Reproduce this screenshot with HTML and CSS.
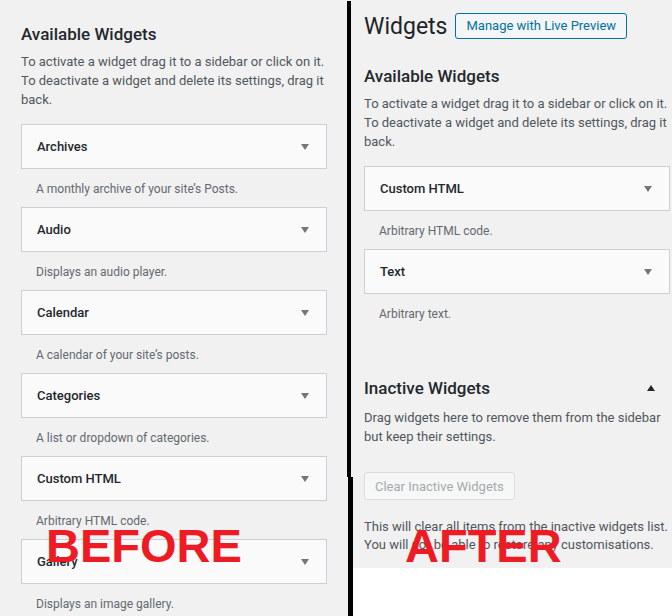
FILE: index.html
```html
<!DOCTYPE html>
<html lang="en">
<head>
    <meta charset="UTF-8">
    <meta name="viewport" content="width=device-width, initial-scale=1.0">
    <title>Widgets - Before and After</title>
    <link rel="stylesheet" href="styles.css">
</head>
<body>
    <div class="panel panel-before">
        <div class="widgets-area">
            <h2 class="section-title">Available Widgets</h2>
            <p class="section-desc">To activate a widget drag it to a sidebar or click on it. To deactivate a widget and delete its settings, drag it back.</p>
            <div class="widget-list">
                <div class="widget">
                    <div class="widget-top"><span class="widget-name">Archives</span><span class="arrow-down"></span></div>
                    <p class="widget-desc">A monthly archive of your site’s Posts.</p>
                </div>
                <div class="widget">
                    <div class="widget-top"><span class="widget-name">Audio</span><span class="arrow-down"></span></div>
                    <p class="widget-desc">Displays an audio player.</p>
                </div>
                <div class="widget">
                    <div class="widget-top"><span class="widget-name">Calendar</span><span class="arrow-down"></span></div>
                    <p class="widget-desc">A calendar of your site’s posts.</p>
                </div>
                <div class="widget">
                    <div class="widget-top"><span class="widget-name">Categories</span><span class="arrow-down"></span></div>
                    <p class="widget-desc">A list or dropdown of categories.</p>
                </div>
                <div class="widget">
                    <div class="widget-top"><span class="widget-name">Custom HTML</span><span class="arrow-down"></span></div>
                    <p class="widget-desc">Arbitrary HTML code.</p>
                </div>
                <div class="widget">
                    <div class="widget-top"><span class="widget-name">Gallery</span><span class="arrow-down"></span></div>
                    <p class="widget-desc">Displays an image gallery.</p>
                </div>
            </div>
        </div>
        <div class="stamp stamp-before">BEFORE</div>
    </div>

    <div class="divider">
        <div class="divider-top"></div>
        <div class="divider-bottom"></div>
    </div>

    <div class="panel panel-after">
        <div class="after-content">
            <div class="page-header">
                <h1 class="page-title">Widgets</h1>
                <a href="#" class="header-button">Manage with Live Preview</a>
            </div>
            <div class="widgets-area">
                <h2 class="section-title">Available Widgets</h2>
                <p class="section-desc">To activate a widget drag it to a sidebar or click on it. To deactivate a widget and delete its settings, drag it back.</p>
                <div class="widget-list">
                    <div class="widget">
                        <div class="widget-top"><span class="widget-name">Custom HTML</span><span class="arrow-down"></span></div>
                        <p class="widget-desc">Arbitrary HTML code.</p>
                    </div>
                    <div class="widget">
                        <div class="widget-top"><span class="widget-name">Text</span><span class="arrow-down"></span></div>
                        <p class="widget-desc">Arbitrary text.</p>
                    </div>
                </div>

                <div class="inactive-head">
                    <h2 class="section-title">Inactive Widgets</h2>
                    <span class="arrow-up"></span>
                </div>
                <p class="section-desc inactive-desc">Drag widgets here to remove them from the sidebar but keep their settings.</p>
                <button class="clear-button" disabled>Clear Inactive Widgets</button>
                <p class="section-desc clear-note">This will clear all items from the inactive widgets list. You will not be able to restore any customisations.</p>
            </div>
        </div>
        <div class="stamp stamp-after">AFTER</div>
    </div>
</body>
</html>
```
FILE: styles.css
```css
body {
    margin: 0;
    width: 672px;
    height: 616px;
    overflow: hidden;
    display: flex;
    background: #fff;
    font-family: Roboto, "Noto Sans", sans-serif;
    color: #23282d;
}
p, h1, h2 {
    margin: 0;
}

.panel {
    position: relative;
}
.panel-before {
    width: 326px;
    padding-left: 21px;
    background: #f1f1f1;
}
.panel-after {
    flex: 1;
    display: flex;
    flex-direction: column;
}
.after-content {
    background: #f1f1f1;
    padding: 13px 0 14px 11px;
}

.divider {
    width: 6px;
    display: flex;
    flex-direction: column;
    background: #f1f1f1;
}
.divider-top {
    margin-top: 1px;
    width: 4px;
    height: 476px;
    background: #000;
}
.divider-bottom {
    flex: 1;
    width: 5px;
    margin-left: 1px;
    background: #000;
}

.widgets-area {
    width: 306px;
}
.panel-before .widgets-area {
    padding-top: 23px;
}

.page-header {
    display: flex;
    align-items: flex-start;
    height: 26px;
    margin-bottom: 26px;
}
.page-title {
    margin-top: 1px;
    font-size: 23px;
    font-weight: 400;
    line-height: 26px;
    color: #1d2327;
}
.header-button {
    margin-left: 8px;
    padding: 0 10px;
    line-height: 24px;
    font-size: 13px;
    color: #0071a1;
    background: #f3f5f6;
    border: 1px solid #0071a1;
    border-radius: 3px;
    text-decoration: none;
}

.section-title {
    font-size: 17px;
    font-weight: 500;
    line-height: 22px;
    color: #23282d;
}
.section-desc {
    margin-top: 7px;
    font-size: 13px;
    line-height: 19px;
    color: #50575e;
}

.widget-list {
    margin-top: 15px;
}
.widget {
    padding-bottom: 9px;
}
.widget-top {
    height: 43px;
    display: flex;
    align-items: center;
    justify-content: space-between;
    padding: 0 17px 0 15px;
    background: #fafafa;
    border: 1px solid #ccd0d4;
}
.widget-name {
    font-size: 13px;
    font-weight: 500;
    color: #23282d;
}
.arrow-down {
    width: 0;
    height: 0;
    border-left: 4px solid transparent;
    border-right: 4px solid transparent;
    border-top: 6px solid #72777c;
}
.widget-desc {
    margin-top: 11px;
    padding-left: 15px;
    font-size: 12px;
    line-height: 18px;
    color: #646970;
}

.inactive-head {
    margin-top: 45px;
    display: flex;
    align-items: center;
    justify-content: space-between;
    padding-right: 15px;
}
.arrow-up {
    width: 0;
    height: 0;
    border-left: 4px solid transparent;
    border-right: 4px solid transparent;
    border-bottom: 6px solid #23282d;
}
.inactive-desc {
    margin-top: 9px;
}
.clear-button {
    display: block;
    margin-top: 26px;
    padding: 0 10px;
    height: 28px;
    font-family: inherit;
    font-size: 13px;
    color: #a7aaad;
    background: #f6f7f7;
    border: 1px solid #dcdcde;
    border-radius: 3px;
}
.clear-note {
    margin-top: 18px;
    line-height: 18px;
}

.stamp {
    position: absolute;
    top: 522px;
    font-family: "Liberation Sans", Arial, sans-serif;
    font-size: 47px;
    font-weight: 700;
    line-height: 47px;
    color: #ed1c24;
}
.stamp-before {
    left: 46px;
}
.stamp-after {
    left: 52px;
}
```
